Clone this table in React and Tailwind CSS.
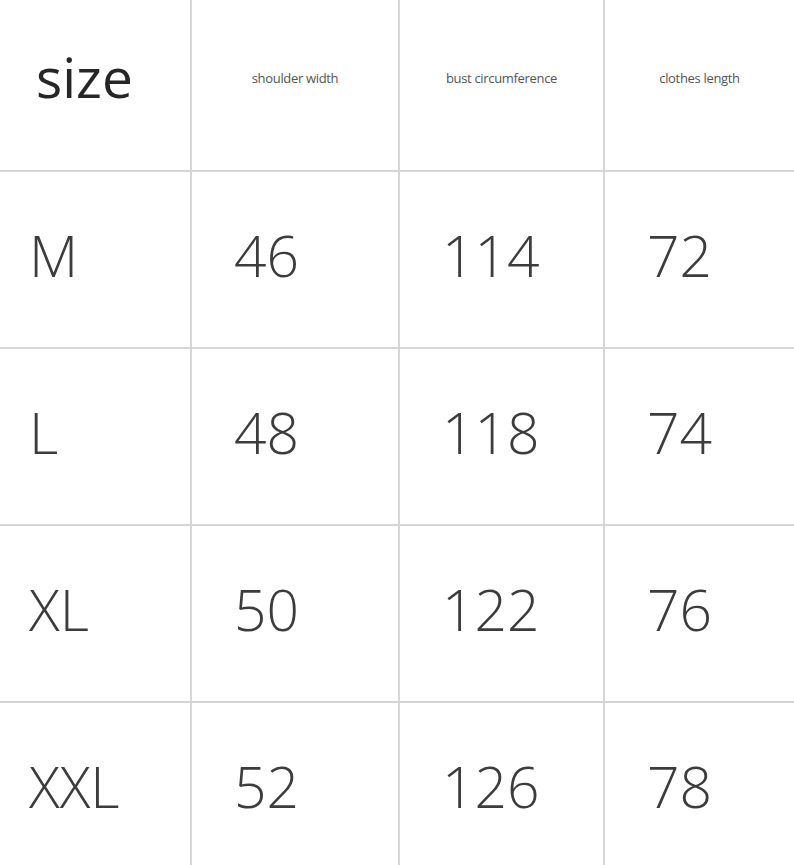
import React from 'react'

const rows = [
  ['M', '46', '114', '72'],
  ['L', '48', '118', '74'],
  ['XL', '50', '122', '76'],
  ['XXL', '52', '126', '78'],
]

const headers = ['shoulder width', 'bust circumference', 'clothes length']

function App() {
  return (
    <div className="h-[865px] w-[794px] overflow-hidden bg-white" style={{ fontFamily: '"Open Sans", "Noto Sans", sans-serif' }}>
      <div className="grid grid-cols-[190px_206px_203px_189px] grid-rows-[170px_175px_175px_175px_175px] gap-[2px] bg-[#d6d6d6]">
        <div className="flex items-center bg-white pl-[36px] pb-[16px] text-[55px] text-[#262626]">size</div>
        {headers.map((h) => (
          <div key={h} className="flex items-center justify-center bg-white pb-[12px] text-[13px] text-[#555] tracking-tight">
            {h}
          </div>
        ))}
        {rows.map((r) =>
          r.map((cell, i) => (
            <div
              key={r[0] + i}
              className={
                i === 0
                  ? 'flex items-center bg-white pl-[29px] pb-[8px] text-[57px] font-[350] text-[#3c3c3c]'
                  : 'flex items-center bg-white pl-[42px] pb-[8px] text-[57px] font-[350] text-[#3c3c3c]'
              }
            >
              {cell}
            </div>
          ))
        )}
      </div>
    </div>
  )
}

export default App
